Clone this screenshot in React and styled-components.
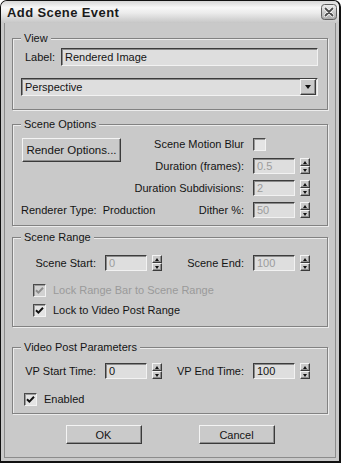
import React from "react";
import styled, { createGlobalStyle } from "styled-components";

const GlobalStyle = createGlobalStyle`
  html, body { margin: 0; padding: 0; background: #ffffff; }
  body { font-family: "Liberation Sans", Arial, sans-serif; font-size: 11px; color: #141414; }
  * { box-sizing: border-box; }
`;

const Window = styled.div`
  width: 341px;
  height: 463px;
  border: 1px solid #111;
  border-right-width: 2px;
  border-bottom-width: 2px;
  border-radius: 7px 7px 0 0;
  background: #c9c9c9;
  display: flex;
  flex-direction: column;
  overflow: hidden;
`;

const TitleBar = styled.div`
  height: 22px;
  flex: none;
  display: flex;
  align-items: center;
  justify-content: space-between;
  padding: 0 2px 0 6px;
  background: linear-gradient(#d6d6d6 0%, #f7f7f7 30%, #ebebeb 55%, #c6c6c6 100%);
`;

const Title = styled.span`
  font-size: 13px;
  font-weight: bold;
  letter-spacing: 0.4px;
  color: #1a1a1a;
`;

const Body = styled.div`
  flex: 1;
  margin: 0 3px 3px;
  border: 1px solid #8c8c8c;
  border-top: none;
  padding: 15px 7px 0;
  display: flex;
  flex-direction: column;
`;

const Group = styled.div`
  position: relative;
  height: ${p => p.$h}px;
  margin-top: ${p => p.$mt || 0}px;
  border: 1px solid #828282;
  box-shadow: inset 1px 1px 0 #ececec, 1px 1px 0 #ececec;
  flex: none;
`;

const Legend = styled.span`
  position: absolute;
  top: -7px;
  left: 8px;
  padding: 0 3px;
  line-height: 13px;
  background: #c9c9c9;
`;

const ViewBody = styled.div`
  padding: 9px 9px 0 8px;
  display: flex;
  flex-direction: column;
  gap: 12px;
`;

const LabelRow = styled.div`
  display: flex;
  align-items: center;
`;

const InlineLabel = styled.span`
  width: 36px;
  margin-left: 4px;
  flex: none;
`;

const TextBox = styled.div`
  height: ${p => p.$h || 16}px;
  width: ${p => (p.$w ? `${p.$w}px` : "auto")};
  flex: ${p => (p.$w ? "none" : 1)};
  display: flex;
  align-items: center;
  padding-left: 3px;
  background: #dedede;
  border-top: 1px solid #3c3c3c;
  border-left: 1px solid #3c3c3c;
  border-bottom: 1px solid #f2f2f2;
  border-right: 1px solid #f2f2f2;
  box-shadow: inset 1px 1px 0 #8a8a8a;
  color: ${p => (p.$disabled ? "#9c9c9c" : "#141414")};
  white-space: nowrap;
`;

const Select = styled(TextBox)`
  justify-content: space-between;
  padding-right: 1px;
`;

const Raised = styled.div`
  background: #cacaca;
  border-top: 1px solid #f4f4f4;
  border-left: 1px solid #f4f4f4;
  border-bottom: 1px solid #3a3a3a;
  border-right: 1px solid #3a3a3a;
  box-shadow: inset -1px -1px 0 #8e8e8e;
`;

const ArrowButton = styled(Raised)`
  width: 16px;
  height: 16px;
  display: flex;
  align-items: center;
  justify-content: center;
  &::after {
    content: "";
    border-left: 3.5px solid transparent;
    border-right: 3.5px solid transparent;
    border-top: 4px solid #111;
  }
`;

const OptionsGrid = styled.div`
  display: grid;
  grid-template-columns: minmax(0, 1fr) auto 57px;
  grid-template-rows: repeat(4, 22px);
  column-gap: 9px;
  align-items: center;
  padding: 8px 17px 0 9px;
`;

const PushButton = styled(Raised)`
  width: ${p => p.$w}px;
  height: ${p => p.$h}px;
  display: flex;
  align-items: center;
  justify-content: center;
`;

const RenderButton = styled(PushButton)`
  grid-row: 1 / span 2;
  grid-column: 1;
  align-self: start;
  margin-top: 5px;
  font-size: 11.5px;
`;

const RightLabel = styled.span`
  grid-column: 2;
  text-align: right;
  white-space: nowrap;
`;

const Renderer = styled.span`
  grid-column: 1;
  grid-row: 4;
  white-space: pre;
  margin-left: -1px;
`;

const SpinField = styled.div`
  display: flex;
  align-items: center;
  gap: 5px;
`;

const Spinner = styled.div`
  width: 10px;
  height: 16px;
  display: flex;
  flex-direction: column;
`;

const SpinHalf = styled(Raised)`
  flex: 1;
  display: flex;
  align-items: center;
  justify-content: center;
  &::after {
    content: "";
    border-left: 2.5px solid transparent;
    border-right: 2.5px solid transparent;
    ${p => (p.$up ? "border-bottom: 3px solid #111;" : "border-top: 3px solid #111;")}
  }
`;

const FieldRow = styled.div`
  display: grid;
  grid-template-columns: 92px 57px 91px 57px;
  align-items: center;
  margin-top: ${p => p.$mt}px;
  height: 16px;
  & > span {
    text-align: right;
    padding-right: 9px;
    white-space: nowrap;
  }
`;

const CheckList = styled.div`
  display: flex;
  flex-direction: column;
  gap: 6px;
  margin-top: ${p => p.$mt}px;
  padding-left: ${p => p.$pl}px;
`;

const CheckRow = styled.div`
  display: flex;
  align-items: center;
  gap: 7px;
  height: 14px;
  color: ${p => (p.$disabled ? "#9a9a9a" : "#141414")};
`;

const Box = styled.div`
  width: 13px;
  height: 13px;
  flex: none;
  display: flex;
  align-items: center;
  justify-content: center;
  background: ${p => (p.$disabled ? "#d2d2d2" : "#e4e4e4")};
  border-top: 1px solid #4a4a4a;
  border-left: 1px solid #4a4a4a;
  border-bottom: 1px solid #f2f2f2;
  border-right: 1px solid #f2f2f2;
  box-shadow: inset 1px 1px 0 #9a9a9a;
  justify-self: start;
`;

const ButtonRow = styled.div`
  display: flex;
  justify-content: center;
  gap: 57px;
  margin-top: 11px;
`;

const CloseButton = () => (
  <svg width="16" height="16" viewBox="0 0 16 16">
    <defs>
      <linearGradient id="cb" x1="0" y1="0" x2="0" y2="1">
        <stop offset="0" stopColor="#eeeeee" />
        <stop offset="1" stopColor="#a8a8a8" />
      </linearGradient>
    </defs>
    <rect x="0.5" y="0.5" width="15" height="15" rx="3" fill="url(#cb)" stroke="#5e5e5e" />
    <path d="M4.5 4.5 L11.5 11.5 M11.5 4.5 L4.5 11.5" stroke="#f8f8f8" strokeWidth="3.4" strokeLinecap="round" />
    <path d="M4.5 4.5 L11.5 11.5 M11.5 4.5 L4.5 11.5" stroke="#4a4a4a" strokeWidth="1.8" strokeLinecap="round" />
  </svg>
);

const Check = ({ color }) => (
  <svg width="9" height="9" viewBox="0 0 9 9">
    <path d="M1 4.2 L3.4 6.6 L8 1.8" fill="none" stroke={color} strokeWidth="2" />
  </svg>
);

const Spin = ({ value, disabled }) => (
  <SpinField>
    <TextBox $w={42} $disabled={disabled}>{value}</TextBox>
    <Spinner>
      <SpinHalf $up />
      <SpinHalf />
    </Spinner>
  </SpinField>
);

const CheckItem = ({ label, disabled }) => (
  <CheckRow $disabled={disabled}>
    <Box $disabled={disabled}>
      <Check color={disabled ? "#8c8c8c" : "#111"} />
    </Box>
    {label}
  </CheckRow>
);

export default function App() {
  return (
    <>
      <GlobalStyle />
      <Window>
        <TitleBar>
          <Title>Add Scene Event</Title>
          <CloseButton />
        </TitleBar>
        <Body>
          <Group $h={72}>
            <Legend>View</Legend>
            <ViewBody>
              <LabelRow>
                <InlineLabel>Label:</InlineLabel>
                <TextBox $h={18}>Rendered Image</TextBox>
              </LabelRow>
              <Select $h={20}>
                Perspective
                <ArrowButton />
              </Select>
            </ViewBody>
          </Group>

          <Group $h={102} $mt={14}>
            <Legend>Scene Options</Legend>
            <OptionsGrid>
              <RenderButton $w={99} $h={24}>Render Options...</RenderButton>
              <RightLabel>Scene Motion Blur</RightLabel>
              <Box />
              <RightLabel>Duration (frames):</RightLabel>
              <Spin value="0.5" disabled />
              <RightLabel>Duration Subdivisions:</RightLabel>
              <Spin value="2" disabled />
              <Renderer>{"Renderer Type:  Production"}</Renderer>
              <RightLabel>Dither %:</RightLabel>
              <Spin value="50" disabled />
            </OptionsGrid>
          </Group>

          <Group $h={90} $mt={11}>
            <Legend>Scene Range</Legend>
            <FieldRow $mt={17}>
              <span>Scene Start:</span>
              <Spin value="0" disabled />
              <span>Scene End:</span>
              <Spin value="100" disabled />
            </FieldRow>
            <CheckList $mt={12} $pl={20}>
              <CheckItem label="Lock Range Bar to Scene Range" disabled />
              <CheckItem label="Lock to Video Post Range" />
            </CheckList>
          </Group>

          <Group $h={67} $mt={20}>
            <Legend>Video Post Parameters</Legend>
            <FieldRow $mt={15}>
              <span>VP Start Time:</span>
              <Spin value="0" />
              <span>VP End Time:</span>
              <Spin value="100" />
            </FieldRow>
            <CheckList $mt={13} $pl={11}>
              <CheckItem label="Enabled" />
            </CheckList>
          </Group>

          <ButtonRow>
            <PushButton $w={76} $h={19}>OK</PushButton>
            <PushButton $w={76} $h={19}>Cancel</PushButton>
          </ButtonRow>
        </Body>
      </Window>
    </>
  );
}
